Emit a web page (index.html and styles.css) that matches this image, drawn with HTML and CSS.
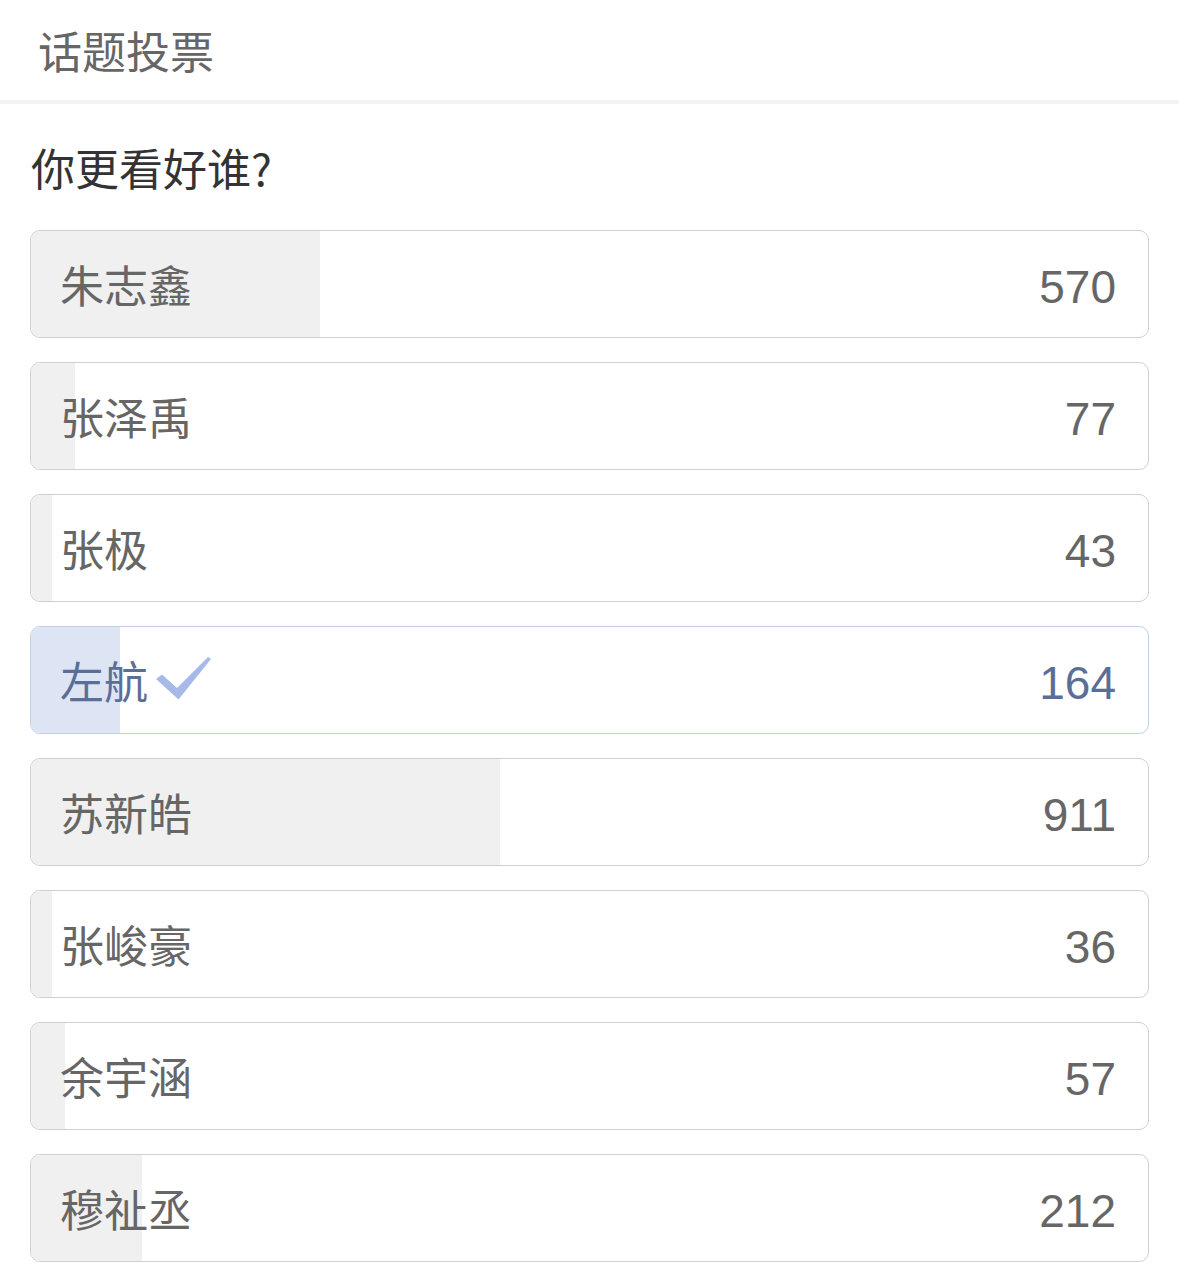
FILE: index.html
```html
<!DOCTYPE html>
<html>
<head>
  <title>话题投票</title>
  <link rel="stylesheet" href="styles.css">
</head>
<body>

  <div class="header">话题投票</div>

  <div class="poll">
    <div class="question">你更看好谁?</div>

    <div class="options">
      <div class="option">
        <div class="fill" style="width: 25.9%;"></div>
        <span class="name">朱志鑫</span>
        <span class="count">570</span>
      </div>
      <div class="option">
        <div class="fill" style="width: 3.9%;"></div>
        <span class="name">张泽禹</span>
        <span class="count">77</span>
      </div>
      <div class="option">
        <div class="fill" style="width: 1.9%;"></div>
        <span class="name">张极</span>
        <span class="count">43</span>
      </div>
      <div class="option selected">
        <div class="fill" style="width: 8%;"></div>
        <span class="name">左航
          <svg class="check" width="56" height="44" viewBox="0 0 56 44">
            <path d="M1 23 L7 18.5 L22 32 L53 1 L56 3 L23.5 43.5 Z" fill="#a6b9e8"/>
          </svg>
        </span>
        <span class="count">164</span>
      </div>
      <div class="option">
        <div class="fill" style="width: 42%;"></div>
        <span class="name">苏新皓</span>
        <span class="count">911</span>
      </div>
      <div class="option">
        <div class="fill" style="width: 1.9%;"></div>
        <span class="name">张峻豪</span>
        <span class="count">36</span>
      </div>
      <div class="option">
        <div class="fill" style="width: 3%;"></div>
        <span class="name">余宇涵</span>
        <span class="count">57</span>
      </div>
      <div class="option">
        <div class="fill" style="width: 9.9%;"></div>
        <span class="name">穆祉丞</span>
        <span class="count">212</span>
      </div>
    </div>
  </div>

</body>
</html>
```

FILE: styles.css
```css
body {
  margin: 0;
  font-family: "Noto Sans CJK SC", sans-serif;
  background-color: #fff;
}

.header {
  height: 104px;
  box-sizing: border-box;
  display: flex;
  align-items: center;
  padding-left: 38px;
  font-size: 44px;
  color: #666;
  border-bottom: 4px solid #f3f3f3;
}

.poll {
  padding: 0 30px;
}

.question {
  height: 126px;
  display: flex;
  align-items: center;
  padding-left: 1px;
  font-size: 44px;
  color: #333;
}

.options {
  display: flex;
  flex-direction: column;
  gap: 24px;
}

.option {
  position: relative;
  height: 108px;
  box-sizing: border-box;
  border: 1px solid #cfcfcf;
  border-radius: 10px;
  overflow: hidden;
  display: flex;
  align-items: center;
  justify-content: space-between;
  padding: 0 32px 0 29px;
  color: #666;
}

.option .fill {
  position: absolute;
  top: 0;
  left: 0;
  bottom: 0;
  background-color: #f0f0f0;
}

.option .name {
  position: relative;
  display: flex;
  align-items: center;
  font-size: 44px;
  line-height: 1;
}

.option .count {
  position: relative;
  padding-top: 5px;
  font-family: "Liberation Sans", sans-serif;
  font-size: 46px;
  line-height: 1;
}

.option.selected {
  border-color: #c3cfe6;
  color: #5b6e97;
}

.option.selected .fill {
  background-color: #dde5f5;
}

.check {
  margin-left: 7px;
  margin-top: -4px;
}
```
